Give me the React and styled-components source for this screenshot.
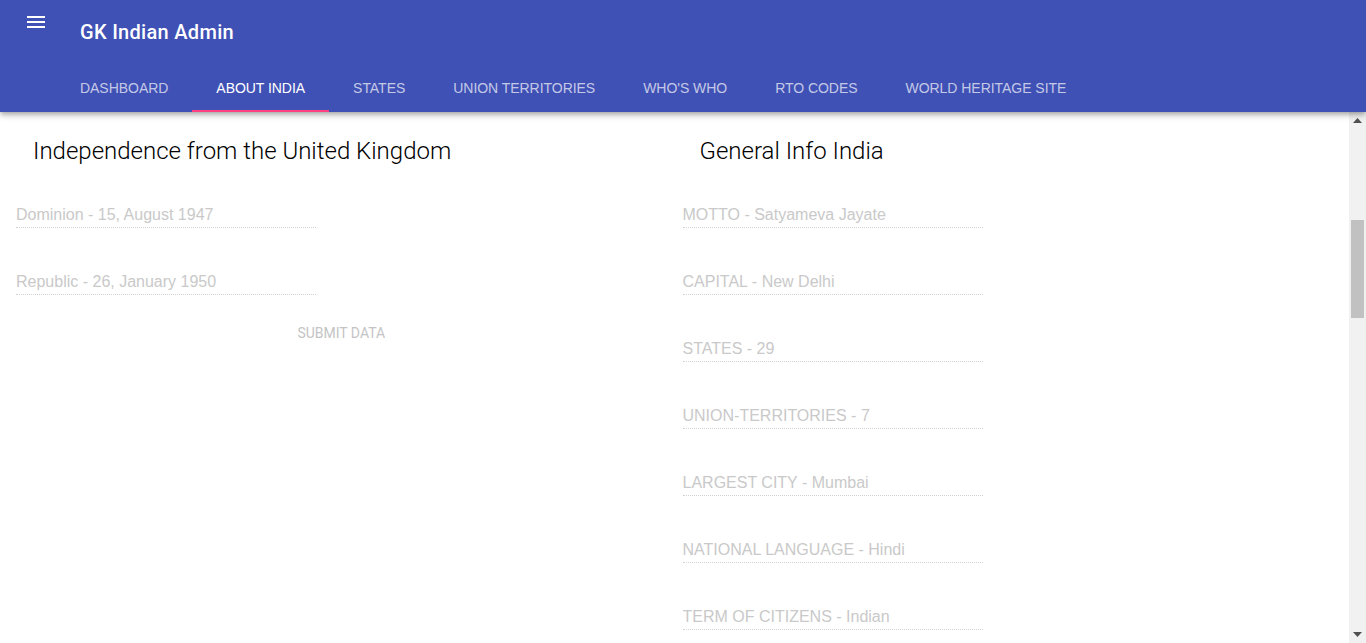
import React from 'react'
import styled, { createGlobalStyle } from 'styled-components'

const GlobalStyle = createGlobalStyle`
    html, body {
        margin: 0;
        padding: 0;
        height: 100%;
        overflow: hidden;
        font-family: Roboto, "Liberation Sans", Arial, sans-serif;
    }
    #root {
        height: 100%;
    }
`;

const Shell = styled.div`
    display: flex;
    flex-direction: column;
    height: 100%;
`;

// blue app bar with toolbar + tabs
const AppBar = styled.header`
    flex: none;
    position: relative;
    z-index: 2;
    background-color: #3f51b5;
    color: #fff;
    box-shadow: 0 2px 4px -1px rgba(0,0,0,.2), 0 4px 5px 0 rgba(0,0,0,.14), 0 1px 10px 0 rgba(0,0,0,.12);
`;

const Toolbar = styled.div`
    height: 64px;
    display: flex;
    align-items: flex-start;
`;

const MenuButton = styled.button`
    width: 24px;
    height: 24px;
    margin: 10px 32px 0 24px;
    padding: 0;
    border: none;
    background: transparent;
    color: #fff;
    display: flex;
`;

const Title = styled.h1`
    margin: 20px 0 0 0;
    font-size: 20px;
    font-weight: 500;
    line-height: 24px;
    letter-spacing: 0.3px;
`;

const TabRow = styled.nav`
    display: flex;
    height: 48px;
    padding-left: 56px;
`;

const Tab = styled.div`
    position: relative;
    display: flex;
    align-items: center;
    padding: 0 24px;
    font-family: "Liberation Sans", Arial, sans-serif;
    font-size: 14px;
    font-weight: 400;
    letter-spacing: -0.04px;
    text-transform: uppercase;
    color: ${p => (p.active ? '#fff' : 'rgba(255,255,255,0.7)')};

    &::after {
        content: '';
        display: ${p => (p.active ? 'block' : 'none')};
        position: absolute;
        left: 0;
        right: 0;
        bottom: 0;
        height: 2px;
        background: #ff4081;
    }
`;

// body under the bar: content + scrollbar strip
const Body = styled.div`
    flex: 1;
    display: flex;
    min-height: 0;
`;

const Content = styled.main`
    flex: 1;
    overflow: hidden;
    background: #fff;
`;

const ScrollTrack = styled.div`
    flex: none;
    width: 17px;
    background: #f1f1f1;
    display: flex;
    flex-direction: column;
    align-items: center;
`;

const ScrollArrow = styled.div`
    width: 17px;
    height: 17px;
    display: flex;
    align-items: center;
    justify-content: center;
    margin-top: ${p => (p.down ? 'auto' : '0')};
`;

const ScrollThumb = styled.div`
    width: 13px;
    height: 98px;
    margin-top: 91px;
    background: #c1c1c1;
`;

const Columns = styled.div`
    display: grid;
    grid-template-columns: 1fr 1fr;
    padding: 0 8px 40px;
`;

const Column = styled.section`
    display: flex;
    flex-direction: column;
    padding: 0 8px;
`;

const Heading = styled.h2`
    margin: 23px 0 0 17px;
    font-size: 24px;
    font-weight: 300;
    line-height: 32px;
    color: #000;
`;

const FieldList = styled.div`
    display: flex;
    flex-direction: column;
    gap: 43px;
    margin-top: 37px;
`;

const Field = styled.input`
    width: 300px;
    height: 20px;
    box-sizing: content-box;
    padding: 1px 0 2px;
    margin: 0;
    border: none;
    border-bottom: 1px dotted #d2d2d2;
    background: transparent;
    font-family: "Liberation Sans", Arial, sans-serif;
    font-size: 16px;
    line-height: 20px;
    outline: none;

    &::placeholder {
        color: #c9c9c9;
        opacity: 1;
    }
`;

const SubmitButton = styled.button`
    align-self: center;
    margin-top: 20px;
    height: 36px;
    padding: 0 16px;
    border: none;
    background: transparent;
    font-family: Roboto, "Liberation Sans", Arial, sans-serif;
    font-size: 14px;
    font-weight: 400;
    text-transform: uppercase;
    color: #c4c4c4;
`;

const tabs = ['Dashboard', 'About India', 'States', 'Union Territories', "Who's Who", 'RTO Codes', 'World Heritage Site'];

const independence = ['Dominion - 15, August 1947', 'Republic - 26, January 1950'];

const generalInfo = [
    'MOTTO - Satyameva Jayate',
    'CAPITAL - New Delhi',
    'STATES - 29',
    'UNION-TERRITORIES - 7',
    'LARGEST CITY - Mumbai',
    'NATIONAL LANGUAGE - Hindi',
    'TERM OF CITIZENS - Indian',
    'CURRENCY - Indian Rupee',
    'NATIONAL ANIMAL - Tiger',
];

function MenuIcon() {
    return (
        <svg width="24" height="24" viewBox="0 0 24 24" fill="currentColor">
            <path d="M3 18h18v-2H3v2zm0-5h18v-2H3v2zm0-7v2h18V6H3z" />
        </svg>
    );
}

function Arrow({ down }) {
    return (
        <svg width="9" height="5" viewBox="0 0 9 5">
            <path d={down ? 'M0 0h9L4.5 5z' : 'M0 5h9L4.5 0z'} fill="#505050" />
        </svg>
    );
}

export default function App() {
    return (
        <>
            <GlobalStyle />
            <Shell>
                <AppBar>
                    <Toolbar>
                        <MenuButton aria-label="menu"><MenuIcon /></MenuButton>
                        <Title>GK Indian Admin</Title>
                    </Toolbar>
                    <TabRow>
                        {tabs.map(t => (
                            <Tab key={t} active={t === 'About India'}>{t}</Tab>
                        ))}
                    </TabRow>
                </AppBar>
                <Body>
                    <Content>
                        <Columns>
                            <Column>
                                <Heading>Independence from the United Kingdom</Heading>
                                <FieldList>
                                    {independence.map(v => (
                                        <Field key={v} placeholder={v} disabled />
                                    ))}
                                </FieldList>
                                <SubmitButton disabled>Submit Data</SubmitButton>
                            </Column>
                            <Column>
                                <Heading>General Info India</Heading>
                                <FieldList>
                                    {generalInfo.map(v => (
                                        <Field key={v} placeholder={v} disabled />
                                    ))}
                                </FieldList>
                            </Column>
                        </Columns>
                    </Content>
                    <ScrollTrack>
                        <ScrollArrow><Arrow /></ScrollArrow>
                        <ScrollThumb />
                        <ScrollArrow down><Arrow down /></ScrollArrow>
                    </ScrollTrack>
                </Body>
            </Shell>
        </>
    );
}
